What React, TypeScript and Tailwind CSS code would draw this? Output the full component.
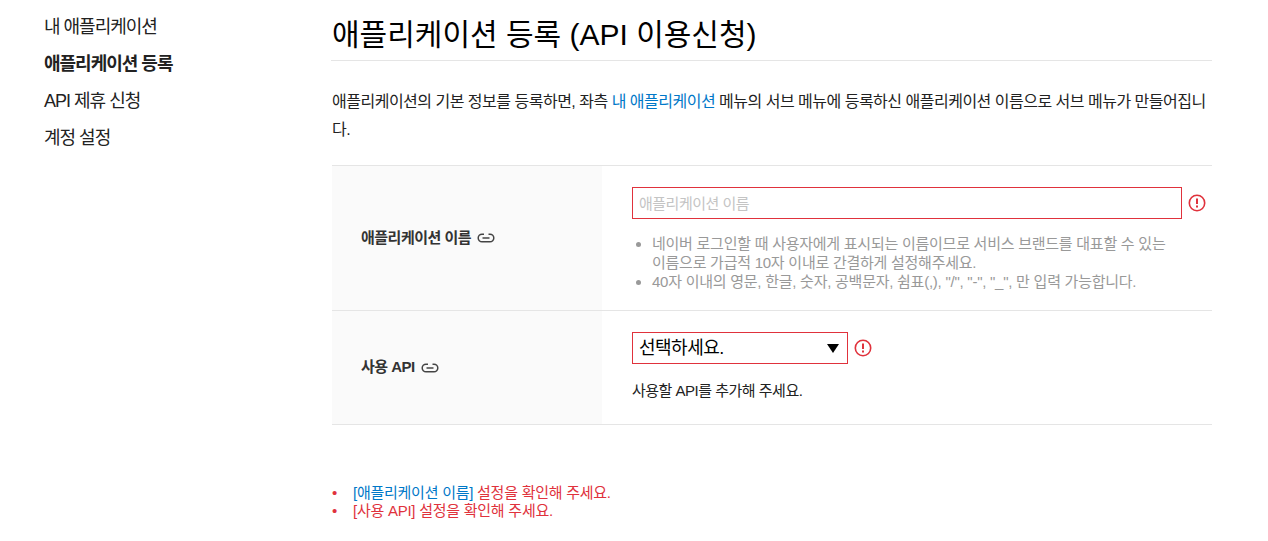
import { ReactNode } from "react";

const font = { fontFamily: '"Liberation Sans", "Noto Sans CJK KR", sans-serif' };

function LinkIcon() {
  return (
    <svg width="18" height="10" viewBox="0 0 18 10" fill="none" stroke="#444" strokeWidth="1.5" className="ml-1.5 shrink-0">
      <path d="M7 1.2H5a3.8 3.8 0 0 0 0 7.6h8a3.8 3.8 0 0 0 0-7.6h-1.5" />
      <path d="M5.5 5h7" />
    </svg>
  );
}

function ErrorIcon() {
  return (
    <svg width="18" height="18" viewBox="0 0 18 18" fill="none" className="shrink-0">
      <circle cx="9" cy="9" r="7.7" stroke="#e0323c" strokeWidth="1.6" />
      <path d="M9 4.5v5.5" stroke="#e0323c" strokeWidth="2" />
      <path d="M9 11.6v2" stroke="#e0323c" strokeWidth="2" />
    </svg>
  );
}

function Row({ label, className, children }: { label: ReactNode; className: string; children: ReactNode }) {
  return (
    <div className={`flex border-b border-[#e5e5e5] ${className}`}>
      <div className="flex w-[270px] shrink-0 items-center bg-[#fafafa] pl-[29px] text-[15px] font-bold tracking-[-0.5px] text-[#333]">
        {label}
      </div>
      <div className="min-w-0 flex-1 pl-[30px]">{children}</div>
    </div>
  );
}

export default function App() {
  return (
    <div className="flex h-[541px] w-[1268px] overflow-hidden bg-white text-[#222]" style={font}>
      <nav className="w-[332px] shrink-0 pl-[44px] pt-[9px] text-[18px] tracking-[-1px]">
        <ul className="flex flex-col">
          <li className="h-[37px] leading-[37px]">내 애플리케이션</li>
          <li className="h-[37px] font-bold leading-[37px]">애플리케이션 등록</li>
          <li className="h-[37px] leading-[37px]">API 제휴 신청</li>
          <li className="h-[37px] leading-[37px]">계정 설정</li>
        </ul>
      </nav>

      <main className="w-[880px] shrink-0">
        <h1 className="-ml-px h-[61px] border-b border-[#e5e5e5] pl-px pt-[14px] text-[30px] font-normal leading-[42px] text-black">
          애플리케이션 등록 (API 이용신청)
        </h1>
        <p className="mt-[27px] text-[16px] leading-[28px] tracking-[-0.5px]">
          애플리케이션의 기본 정보를 등록하면, 좌측 <span className="text-[#0078c8]">내 애플리케이션</span> 메뉴의 서브 메뉴에 등록하신 애플리케이션 이름으로 서브 메뉴가 만들어집니다.
        </p>

        <div className="mt-[21px] border-t border-[#e5e5e5]">
          <Row label={<>애플리케이션 이름<LinkIcon /></>} className="h-[145px]">
            <div className="flex items-center pt-[21px]">
              <input
                placeholder="애플리케이션 이름"
                className="h-[32px] w-[550px] border border-[#e0323c] px-[6px] text-[15px] tracking-[-0.5px] outline-none placeholder:text-[#c4c4c4]"
              />
              <span className="ml-[6px]"><ErrorIcon /></span>
            </div>
            <ul className="mt-[15px] w-[540px] list-disc pl-[20px] text-[15px] leading-[19px] tracking-[-0.25px] text-[#999]">
              <li>네이버 로그인할 때 사용자에게 표시되는 이름이므로 서비스 브랜드를 대표할 수 있는 이름으로 가급적 10자 이내로 간결하게 설정해주세요.</li>
              <li>40자 이내의 영문, 한글, 숫자, 공백문자, 쉼표(,), "/", "-", "_", 만 입력 가능합니다.</li>
            </ul>
          </Row>
          <Row label={<>사용 API<LinkIcon /></>} className="h-[114px]">
            <div className="flex items-center pt-[21px]">
              <div className="flex h-[32px] w-[216px] items-center justify-between border border-[#e0323c] pl-[6px] pr-[8px] text-[18px] tracking-[-0.5px] text-black">
                <span>선택하세요.</span>
                <span className="h-0 w-0 border-x-[6px] border-t-[9px] border-x-transparent border-t-black" />
              </div>
              <span className="ml-[6px]"><ErrorIcon /></span>
            </div>
            <p className="mt-[17px] text-[15px] leading-[20px] tracking-[-0.5px]">사용할 API를 추가해 주세요.</p>
          </Row>
        </div>

        <ul className="mt-[59px] text-[15px] leading-[18px] tracking-[-0.25px] text-[#e0323c]">
          <li className="flex"><span className="w-[21px]">•</span><span><span className="text-[#0078c8]">[애플리케이션 이름]</span> 설정을 확인해 주세요.</span></li>
          <li className="flex"><span className="w-[21px]">•</span><span>[사용 API] 설정을 확인해 주세요.</span></li>
        </ul>
      </main>
    </div>
  );
}
